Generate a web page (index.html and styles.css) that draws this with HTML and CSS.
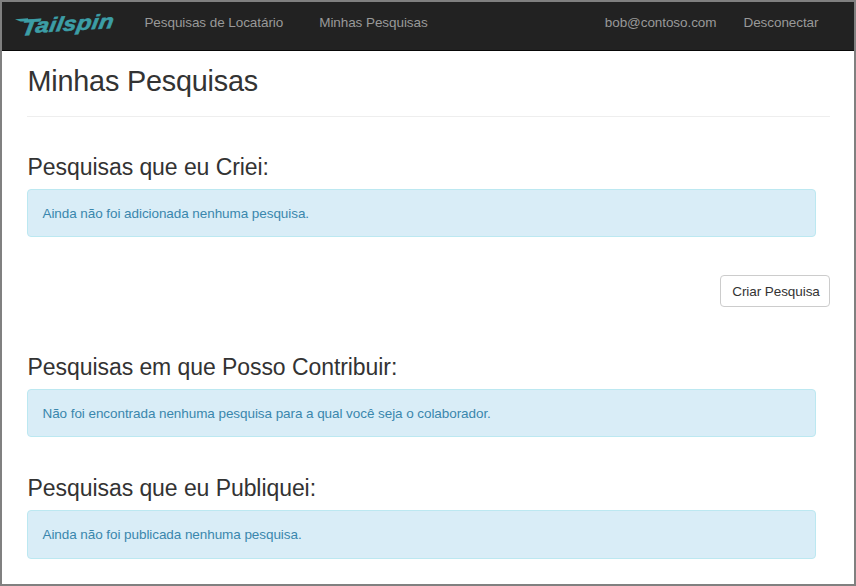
FILE: index.html
```html
<!DOCTYPE html>
<html lang="pt">
<head>
<meta charset="utf-8">
<title>Minhas Pesquisas</title>
<link rel="stylesheet" href="styles.css">
</head>
<body>
<header class="navbar">
  <a class="brand">
    <svg class="logo" width="104" height="34" viewBox="0 -2 104 34" role="img" aria-label="Tailspin">
      <path class="swash" d="M1 9.2 L14 8.2 L14 11.4 L6.5 11.6 Z"/>
      <text class="wordmark" transform="matrix(1.17 -0.07 -0.16 1 20.8 22.7)"><tspan class="initial" x="-12.2" y="2.2">T</tspan><tspan x="0" y="0" textLength="66.5" lengthAdjust="spacing">ailspin</tspan></text>
    </svg>
  </a>
  <nav class="links">
    <a>Pesquisas de Locatário</a>
    <a>Minhas Pesquisas</a>
  </nav>
  <nav class="account">
    <a>bob@contoso.com</a>
    <a>Desconectar</a>
  </nav>
</header>
<main class="content">
  <h1>Minhas Pesquisas</h1>
  <section class="created">
    <h2>Pesquisas que eu Criei:</h2>
    <div class="alert">Ainda não foi adicionada nenhuma pesquisa.</div>
    <button class="btn">Criar Pesquisa</button>
  </section>
  <section class="contribute">
    <h2>Pesquisas em que Posso Contribuir:</h2>
    <div class="alert">Não foi encontrada nenhuma pesquisa para a qual você seja o colaborador.</div>
  </section>
  <section class="published">
    <h2>Pesquisas que eu Publiquei:</h2>
    <div class="alert">Ainda não foi publicada nenhuma pesquisa.</div>
  </section>
</main>
</body>
</html>
```
FILE: styles.css
```css
* { box-sizing: border-box; }

body {
  margin: 0;
  height: 586px;
  border: 2px solid #808080;
  overflow: hidden;
  background: #fff;
  color: #333;
  font: 13.5px/19px "Liberation Sans", Arial, sans-serif;
  letter-spacing: -0.07px;
}

.navbar {
  display: flex;
  height: 49px;
  padding: 0 35.5px 0 12px;
  background: #222;
  border-bottom: 1px solid #080808;
  color: #999;
}

.brand { width: 130.4px; padding-top: 6px; }
.logo { display: block; }
.swash, .wordmark { fill: #3c9ea6; }
.wordmark {
  font: italic 700 20.5px "Liberation Sans", sans-serif;
  letter-spacing: 0;
  stroke: #3c9ea6;
  stroke-width: 0.6px;
}
.initial { font-size: 23px; }

.links, .account { display: flex; padding-top: 11px; }
.links { gap: 36px; }
.account { gap: 27px; margin-left: auto; }

.content { padding: 0 24px 0 25px; }

h1, h2 { margin: 0; font-weight: 400; }
h1 {
  height: 66px;
  padding-top: 13px;
  border-bottom: 1px solid #eee;
  font-size: 28.8px;
  line-height: 34px;
  letter-spacing: -0.2px;
  text-indent: 0.5px;
}
h2 {
  height: 37px;
  padding-top: 1px;
  font-size: 23px;
  line-height: 28px;
  text-indent: 0.6px;
}

section { display: flex; flex-direction: column; }
.created { padding-top: 35px; }
.contribute { padding-top: 45px; }
.published { padding-top: 36px; }

.alert {
  height: 48px;
  margin-right: 14px;
  padding: 14px 14.5px;
  border: 1px solid #bce8f1;
  border-radius: 4px;
  background: #d9edf7;
  color: #3a87ad;
}
.published .alert { height: 49px; }

.btn {
  align-self: flex-end;
  width: 110px;
  height: 32px;
  margin-top: 38px;
  padding: 0 0 0 2px;
  border: 1px solid #ccc;
  border-radius: 4px;
  background: #fff;
  color: #333;
  font: inherit;
  letter-spacing: inherit;
}
```
